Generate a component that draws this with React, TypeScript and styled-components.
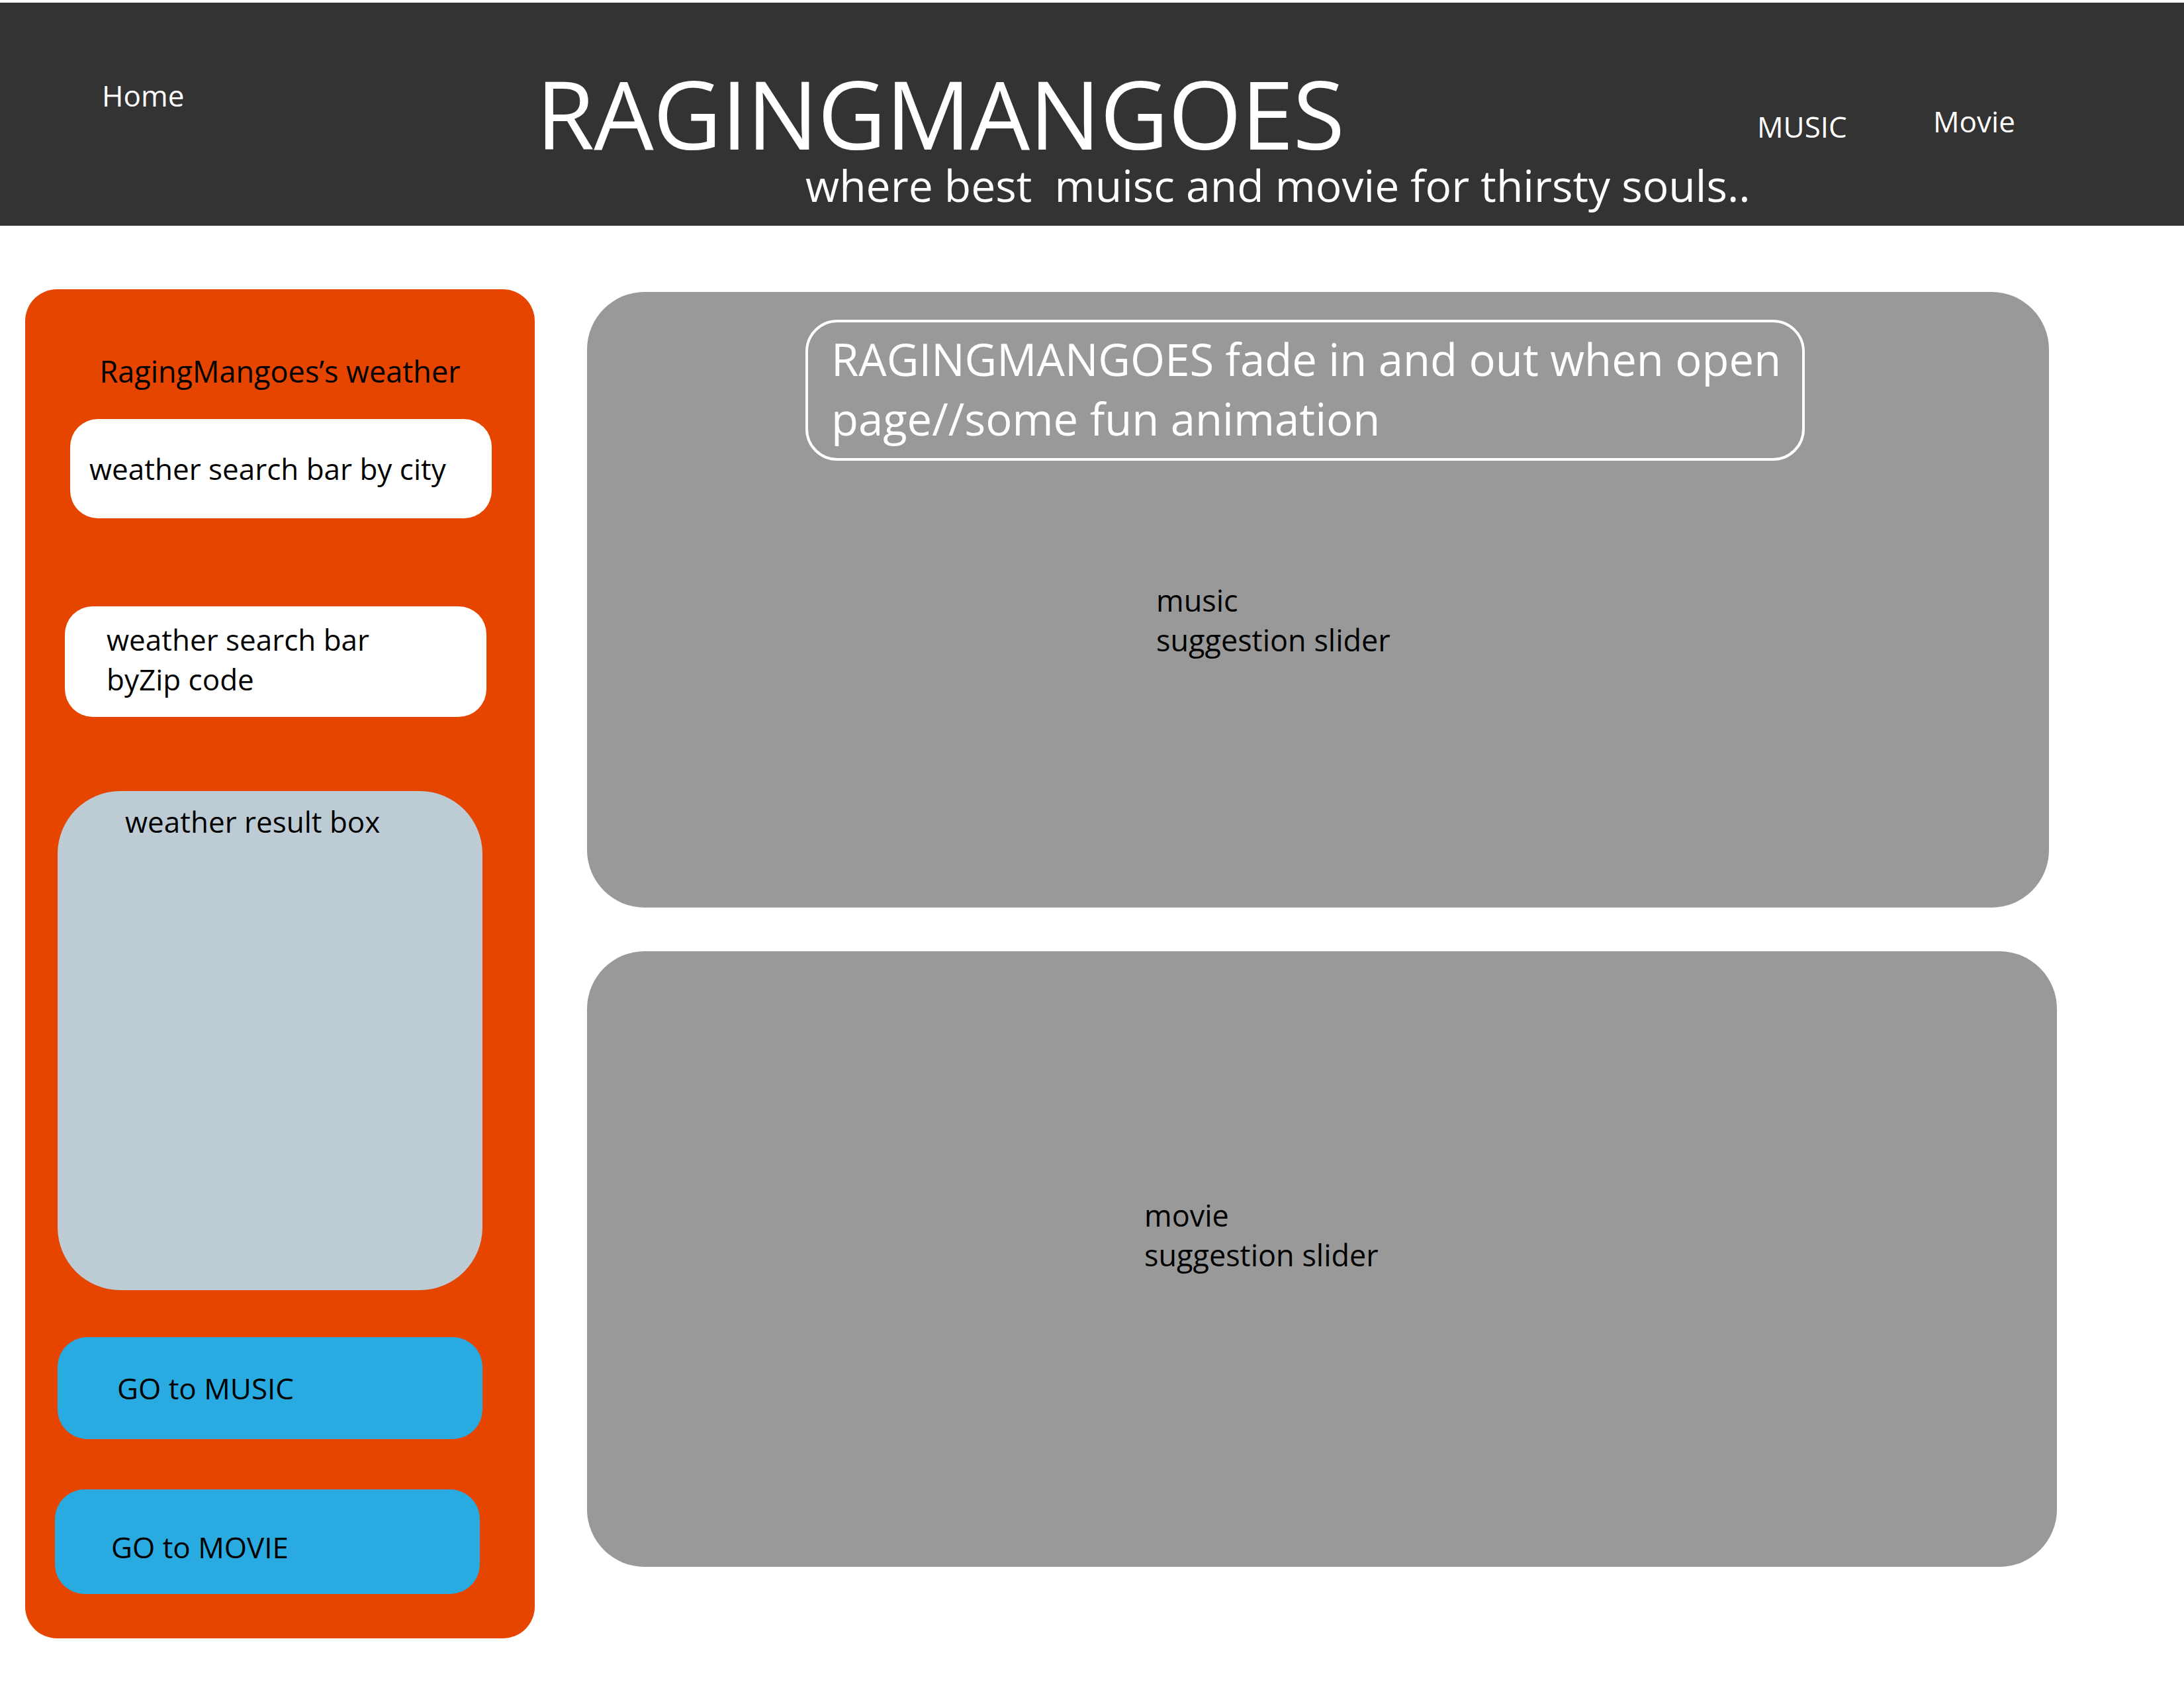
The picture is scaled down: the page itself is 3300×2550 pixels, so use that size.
import React from "react";
import styled, { createGlobalStyle } from "styled-components";

const GlobalStyle = createGlobalStyle`
  html, body {
    margin: 0;
    padding: 0;
    background: #ffffff;
  }
  body {
    font-family: "Open Sans", "Noto Sans", "Liberation Sans", sans-serif;
  }
  *, *::before, *::after {
    box-sizing: border-box;
  }
`;

const Page = styled.div`
  width: 3300px;
  min-height: 2550px;
  padding-top: 4px;
  background: #ffffff;
  display: flex;
  flex-direction: column;
`;

const Header = styled.header`
  height: 337px;
  background: #333333;
  display: grid;
  grid-template-columns: 656px 1845px 266px auto;
  justify-items: start;
  align-items: start;
  padding-left: 154px;
  color: #ffffff;
`;

const NavLink = styled.a<{ $top: number }>`
  display: block;
  margin-top: ${(p) => p.$top}px;
  font-size: 44px;
  line-height: 1;
  color: #ffffff;
  text-decoration: none;
  white-space: nowrap;
`;

const Brand = styled.div`
  display: flex;
  flex-direction: column;
  align-items: flex-start;
`;

const Title = styled.h1`
  margin: 95px 0 0;
  font-size: 143px;
  font-weight: 400;
  line-height: 1;
  letter-spacing: -1px;
  white-space: nowrap;
`;

const Tagline = styled.p`
  margin: 4px 0 0 407px;
  font-size: 66px;
  line-height: 1;
  white-space: pre;
`;

const Main = styled.main`
  display: flex;
  align-items: flex-start;
  gap: 79px;
  padding: 96px 0 0 38px;
`;

const Sidebar = styled.aside`
  flex: none;
  width: 770px;
  height: 2038px;
  background: #e64500;
  border-radius: 48px;
  display: flex;
  flex-direction: column;
  align-items: flex-start;
  padding-top: 101px;
  color: #000000;
`;

const SidebarTitle = styled.h2`
  align-self: stretch;
  margin: 0;
  text-align: center;
  font-size: 45px;
  font-weight: 400;
  line-height: 1;
  white-space: nowrap;
`;

const SearchBox = styled.div<{
  $left: number;
  $top: number;
  $height: number;
  $padTop: number;
  $padLeft: number;
  $lineHeight: number;
}>`
  flex: none;
  width: 637px;
  height: ${(p) => p.$height}px;
  margin: ${(p) => p.$top}px 0 0 ${(p) => p.$left}px;
  padding: ${(p) => p.$padTop}px 0 0 ${(p) => p.$padLeft}px;
  background: #ffffff;
  border-radius: 42px;
  font-size: 44px;
  line-height: ${(p) => p.$lineHeight}px;
  white-space: nowrap;
`;

const ResultBox = styled.div`
  flex: none;
  width: 642px;
  height: 754px;
  margin: 112px 0 0 49px;
  padding: 24px 0 0 102px;
  background: #bdccd4;
  border-radius: 95px;
  font-size: 44px;
  line-height: 1;
  white-space: nowrap;
`;

const GoButton = styled.button<{
  $left: number;
  $top: number;
  $height: number;
  $padLeft: number;
  $dy: number;
}>`
  flex: none;
  display: flex;
  align-items: center;
  width: 642px;
  height: ${(p) => p.$height}px;
  margin: ${(p) => p.$top}px 0 0 ${(p) => p.$left}px;
  padding: ${(p) => p.$dy}px 0 0 ${(p) => p.$padLeft}px;
  border: none;
  background: #29abe2;
  border-radius: 45px;
  font-family: inherit;
  font-size: 44px;
  line-height: 1;
  color: #000000;
  text-align: left;
  white-space: nowrap;
  cursor: pointer;
`;

const Content = styled.section`
  display: flex;
  flex-direction: column;
  gap: 66px;
  margin-top: 4px;
`;

const Panel = styled.div<{ $width: number }>`
  flex: none;
  width: ${(p) => p.$width}px;
  height: 930px;
  background: #999999;
  border-radius: 87px;
  display: flex;
  flex-direction: column;
  align-items: flex-start;
`;

const Banner = styled.div`
  flex: none;
  width: 1510px;
  height: 213px;
  margin: 42px 0 0 330px;
  padding: 10px 0 0 35px;
  border: 4px solid #ffffff;
  border-radius: 48px;
  color: #ffffff;
  font-size: 67px;
  line-height: 90px;
  white-space: nowrap;
`;

const SliderLabel = styled.div<{ $top: number; $left: number }>`
  margin: ${(p) => p.$top}px 0 0 ${(p) => p.$left}px;
  font-size: 45px;
  line-height: 60px;
  color: #000000;
  white-space: nowrap;
`;

export default function App() {
  return (
    <>
      <GlobalStyle />
      <Page>
        <Header>
          <NavLink href="#" $top={118}>
            Home
          </NavLink>
          <Brand>
            <Title>RAGINGMANGOES</Title>
            <Tagline>where best  muisc and movie for thirsty souls..</Tagline>
          </Brand>
          <NavLink href="#" $top={165}>
            MUSIC
          </NavLink>
          <NavLink href="#" $top={157}>
            Movie
          </NavLink>
        </Header>
        <Main>
          <Sidebar>
            <SidebarTitle>RagingMangoes’s weather</SidebarTitle>
            <SearchBox $left={68} $top={50} $height={150} $padTop={53} $padLeft={29} $lineHeight={44}>
              weather search bar by city
            </SearchBox>
            <SearchBox $left={60} $top={133} $height={167} $padTop={20} $padLeft={63} $lineHeight={60}>
              weather search bar
              <br />
              byZip code
            </SearchBox>
            <ResultBox>weather result box</ResultBox>
            <GoButton $left={49} $top={71} $height={154} $padLeft={90} $dy={0}>
              GO to MUSIC
            </GoButton>
            <GoButton $left={45} $top={76} $height={158} $padLeft={85} $dy={16}>
              GO to MOVIE
            </GoButton>
          </Sidebar>
          <Content>
            <Panel $width={2209}>
              <Banner>
                RAGINGMANGOES fade in and out when open
                <br />
                page//some fun animation
              </Banner>
              <SliderLabel $top={181} $left={860}>
                music
                <br />
                suggestion slider
              </SliderLabel>
            </Panel>
            <Panel $width={2221}>
              <SliderLabel $top={369} $left={842}>
                movie
                <br />
                suggestion slider
              </SliderLabel>
            </Panel>
          </Content>
        </Main>
      </Page>
    </>
  );
}
